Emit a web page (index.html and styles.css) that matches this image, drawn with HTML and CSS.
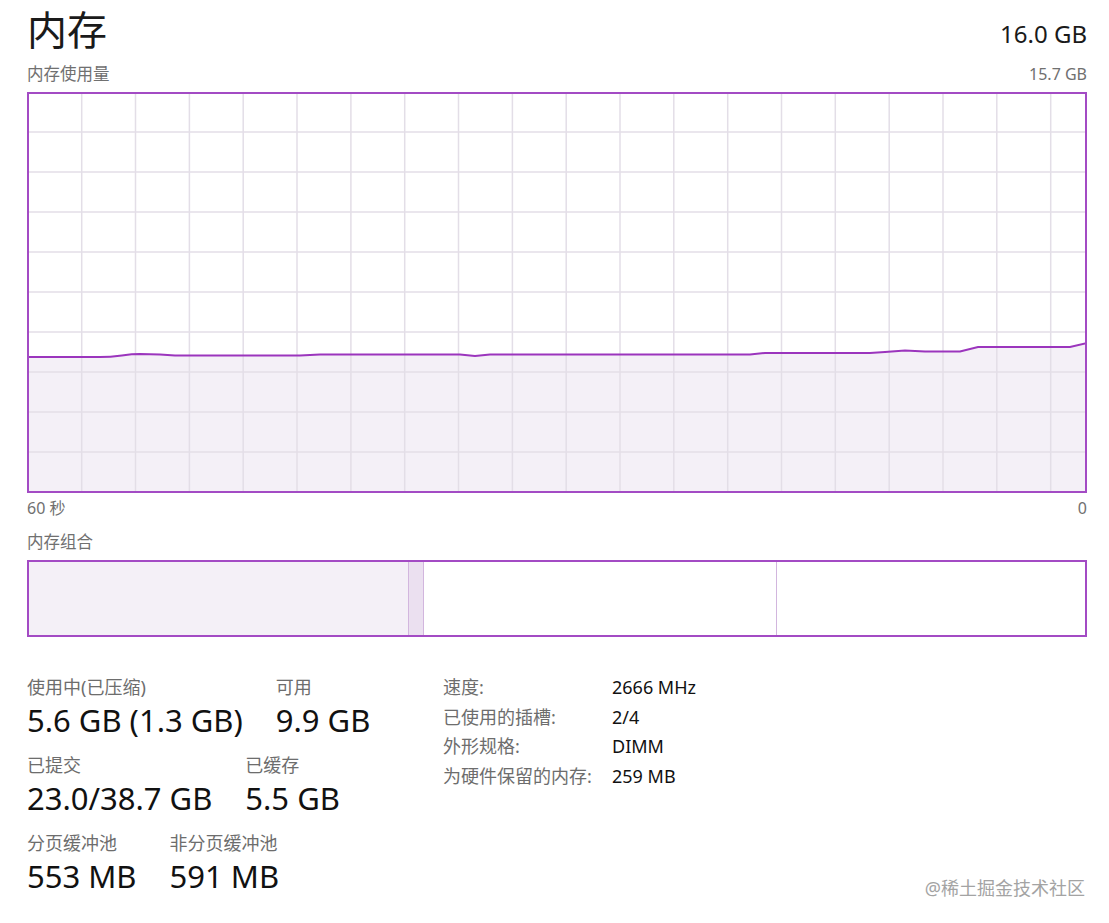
FILE: index.html
```html
<html>
<head>
<meta charset="utf-8">
<link rel="stylesheet" href="styles.css">
</head>
<body>
<div class="page">
  <div class="title-row">
    <h1 class="title">内存</h1>
    <span class="total">16.0 GB</span>
  </div>

  <div class="chart-caption">
    <span>内存使用量</span>
    <span>15.7 GB</span>
  </div>

  <div class="chart">
    <svg viewBox="0 0 1056 397" preserveAspectRatio="none">
      <path class="usage-fill" d="M-2 263L71 263C90 263 95 260 111 260L131 260.5L146 261.5L271 261.5L291 260.5L431 260.5L446 262L461 260.5L721 260.5L736 259L841 259L856 258L876 256.5L896 257.5L931 257.5L949 253L1041 253L1058 249L1058 397L-2 397Z"/>
      <g class="grid">
        <path d="M52.7 0V397M106.5 0V397M160.4 0V397M214.2 0V397M268 0V397M321.9 0V397M375.7 0V397M429.5 0V397M483.4 0V397M537.2 0V397M591 0V397M644.8 0V397M698.7 0V397M752.5 0V397M806.3 0V397M860.2 0V397M914 0V397M967.8 0V397M1021.7 0V397"/>
        <path d="M0 38H1056M0 78H1056M0 118H1056M0 158H1056M0 198H1056M0 238H1056M0 278H1056M0 318H1056M0 358H1056"/>
      </g>
      <path class="usage-line" d="M-2 263L71 263C90 263 95 260 111 260L131 260.5L146 261.5L271 261.5L291 260.5L431 260.5L446 262L461 260.5L721 260.5L736 259L841 259L856 258L876 256.5L896 257.5L931 257.5L949 253L1041 253L1058 249"/>
    </svg>
  </div>

  <div class="chart-axis">
    <span>60 秒</span>
    <span>0</span>
  </div>

  <div class="combo-caption">内存组合</div>
  <div class="combo">
    <div class="seg seg-used" style="width:35.9%"></div>
    <div class="seg seg-modified" style="width:1.5%"></div>
    <div class="seg seg-standby" style="width:33.4%"></div>
    <div class="seg seg-free"></div>
  </div>

  <div class="stats">
    <div class="stats-left">
      <div class="stat-row">
        <div class="stat">
          <div class="stat-label">使用中(已压缩)</div>
          <div class="stat-value">5.6 GB (1.3 GB)</div>
        </div>
        <div class="stat">
          <div class="stat-label">可用</div>
          <div class="stat-value">9.9 GB</div>
        </div>
      </div>
      <div class="stat-row">
        <div class="stat">
          <div class="stat-label">已提交</div>
          <div class="stat-value">23.0/38.7 GB</div>
        </div>
        <div class="stat">
          <div class="stat-label">已缓存</div>
          <div class="stat-value">5.5 GB</div>
        </div>
      </div>
      <div class="stat-row">
        <div class="stat">
          <div class="stat-label">分页缓冲池</div>
          <div class="stat-value">553 MB</div>
        </div>
        <div class="stat">
          <div class="stat-label">非分页缓冲池</div>
          <div class="stat-value">591 MB</div>
        </div>
      </div>
    </div>

    <dl class="specs">
      <dt>速度:</dt><dd>2666 MHz</dd>
      <dt>已使用的插槽:</dt><dd>2/4</dd>
      <dt>外形规格:</dt><dd>DIMM</dd>
      <dt>为硬件保留的内存:</dt><dd>259 MB</dd>
    </dl>
  </div>

  <div class="watermark">@稀土掘金技术社区</div>
</div>
</body>
</html>
```

FILE: styles.css
```css
body {
  margin: 0;
  background: #fff;
  font-family: "Noto Sans", "Noto Sans CJK SC", sans-serif;
  color: #1a1a1a;
}
.page {
  position: relative;
  height: 923px;
  padding: 0 22px 0 27px;
  box-sizing: border-box;
}

/* header */
.title-row {
  display: flex;
  justify-content: space-between;
  align-items: flex-end;
  height: 54px;
}
.title {
  margin: 0;
  font-size: 40px;
  font-weight: normal;
  line-height: 48px;
}
.total {
  font-size: 24px;
  line-height: 32px;
  margin-bottom: 4px;
}

/* usage chart */
.chart-caption,
.chart-axis {
  display: flex;
  justify-content: space-between;
  color: #707070;
  font-size: 16px;
  line-height: 20px;
}
.chart-caption {
  margin-top: 10px;
  margin-bottom: 8px;
}
.chart-caption span:first-child {
  font-size: 16.5px;
}
.chart {
  height: 401px;
  border: 2px solid #a34bc4;
  box-sizing: border-box;
}
.chart svg {
  display: block;
  width: 100%;
  height: 100%;
}
.grid path {
  stroke: #e3dee7;
  stroke-width: 1.5;
  fill: none;
}
.usage-fill {
  fill: #f4f0f7;
}
.usage-line {
  fill: none;
  stroke: #9b35bd;
  stroke-width: 2;
}
.chart-axis {
  margin-top: 5px;
}

/* memory composition */
.combo-caption {
  color: #707070;
  font-size: 16.5px;
  line-height: 20px;
  margin-top: 14px;
  margin-bottom: 8px;
}
.combo {
  display: flex;
  height: 77px;
  border: 2px solid #a34bc4;
  box-sizing: border-box;
}
.seg-used {
  background: #f4f0f7;
}
.seg-modified {
  background: #ebe0f0;
  border-left: 1px solid #d2b6de;
  border-right: 1px solid #d2b6de;
  box-sizing: border-box;
}
.seg-standby {
  border-right: 1px solid #d2b6de;
  box-sizing: border-box;
}
.seg-free {
  flex: 1;
}

/* stats */
.stats {
  display: flex;
  margin-top: 38px;
}
.stats-left {
  width: 416px;
}
.stat-row {
  display: flex;
  gap: 33px;
  margin-bottom: 12px;
}
.stat-label {
  color: #6d6d6d;
  font-size: 18px;
  line-height: 24px;
}
.stat-value {
  font-size: 31px;
  line-height: 42px;
  color: #111;
}
.specs {
  display: grid;
  grid-template-columns: 169px auto;
  grid-auto-rows: 29.7px;
  margin: 0;
  font-size: 18px;
  line-height: 24px;
}
.specs dt {
  color: #6d6d6d;
}
.specs dd {
  margin: 0;
  color: #111;
}

.watermark {
  position: absolute;
  right: 24px;
  bottom: 23px;
  font-size: 18px;
  color: #a3a3a3;
}
```
